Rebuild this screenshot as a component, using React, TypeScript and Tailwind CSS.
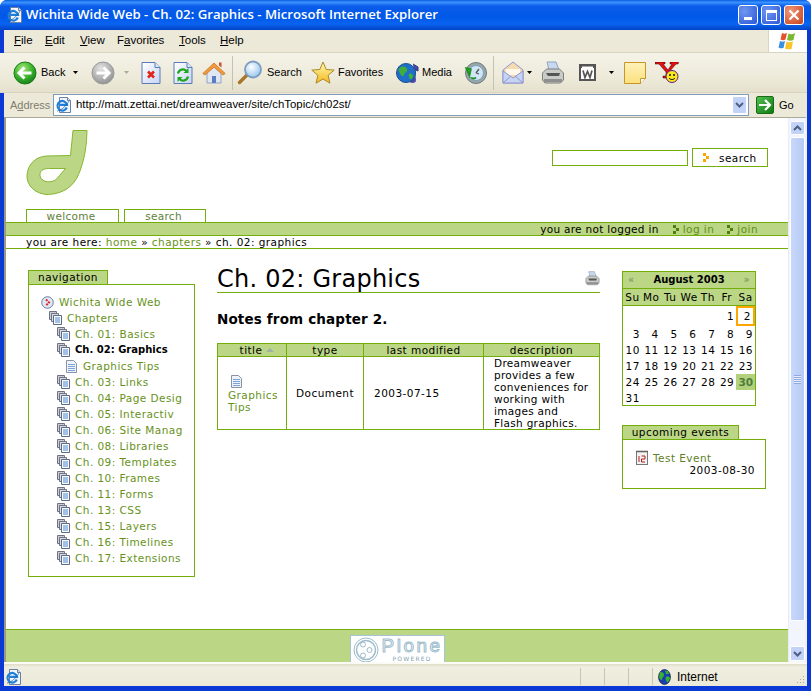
import React from "react";

const sans = "font-['Liberation_Sans',Arial,sans-serif]";

function BackIcon({ gray }: { gray?: boolean }) {
  const id = gray ? "gb" : "gg";
  return (
    <svg width="24" height="24" viewBox="0 0 24 24">
      <defs>
        <radialGradient id={id} cx="40%" cy="30%" r="75%">
          <stop offset="0" stopColor={gray ? "#e4e4e4" : "#a6e87a"} />
          <stop offset="0.55" stopColor={gray ? "#b5b5b5" : "#3fb52f"} />
          <stop offset="1" stopColor={gray ? "#8f8f8f" : "#0f7a15"} />
        </radialGradient>
      </defs>
      <circle cx="12" cy="12" r="11" fill={`url(#${id})`} stroke={gray ? "#999" : "#1b7d1b"} />
      {gray ? (
        <path d="M5.500 12H17M12.500 6.500L18 12l-5.500 5.500" fill="none" stroke="#fff" strokeWidth="3" />
      ) : (
        <path d="M18.500 12H7M11.500 6.500L6 12l5.500 5.500" fill="none" stroke="#fff" strokeWidth="3" />
      )}
    </svg>
  );
}
const Caret = ({ c = "#000" }: { c?: string }) => (
  <svg width="5" height="3" viewBox="0 0 5 3"><path d="M0 0h5L2.500 3z" fill={c} /></svg>
);
const DocFrame = ({ children }: { children: React.ReactNode }) => (
  <svg width="20" height="24" viewBox="0 0 20 24">
    <defs>
      <linearGradient id="dfg" x1="0" y1="0" x2="1" y2="1"><stop offset="0" stopColor="#ffffff" /><stop offset="1" stopColor="#c5d5f5" /></linearGradient>
    </defs>
    <path d="M1 1.500h13l5 5v16H1z" fill="url(#dfg)" stroke="#5a7ab8" />
    <path d="M14 1.500v5h5" fill="#dde7fb" stroke="#5a7ab8" />
    {children}
  </svg>
);
const Stop = () => (
  <DocFrame><path d="M7 10.500l6 6M13 10.500l-6 6" stroke="#e0261a" strokeWidth="2.600" /></DocFrame>
);
const Refresh = () => (
  <DocFrame>
    <path d="M5 12.500a5 5 0 0 1 8.500-2.500" fill="none" stroke="#1fa51f" strokeWidth="2.200" />
    <path d="M15.500 7v5h-5z" fill="#1fa51f" />
    <path d="M15 15.500a5 5 0 0 1-8.500 2.500" fill="none" stroke="#1fa51f" strokeWidth="2.200" />
    <path d="M4.500 21v-5h5z" fill="#1fa51f" />
  </DocFrame>
);
const Home = () => (
  <svg width="24" height="24" viewBox="0 0 24 24">
    <path d="M5 11v11h14V11L12 5z" fill="#dfe7f5" stroke="#8fa3c4" />
    <path d="M10 15h4v7h-4z" fill="#5a7fc0" />
    <path d="M.8 12.500L12 2l11.200 10.500L21 14 12 6.200 3 14z" fill="#f09a3a" stroke="#c8691a" strokeWidth="0.700" />
    <path d="M17 1.500h2.500v5L17 4.500z" fill="#c8502a" />
  </svg>
);
const SearchIco = () => (
  <svg width="27" height="25" viewBox="0 0 27 25">
    <defs>
      <radialGradient id="sg" cx="40%" cy="35%" r="70%"><stop offset="0" stopColor="#ffffff" /><stop offset="1" stopColor="#8fc3ee" /></radialGradient>
    </defs>
    <path d="M10 15L2.500 22.500" stroke="#a9752b" strokeWidth="3.400" strokeLinecap="round" />
    <circle cx="16" cy="9.500" r="8" fill="url(#sg)" stroke="#7d9cc0" strokeWidth="1.800" />
  </svg>
);
const Star = () => (
  <svg width="24" height="24" viewBox="0 0 24 24">
    <defs>
      <linearGradient id="stg" x1="0" y1="0" x2="0" y2="1"><stop offset="0" stopColor="#fffbb5" /><stop offset="1" stopColor="#f7b81a" /></linearGradient>
    </defs>
    <path d="M12 1l3.200 7.500 8 .6-6.100 5.200 1.900 7.900L12 18l-7 4.200 1.900-7.900L.8 9.100l8-.6z" fill="url(#stg)" stroke="#a9892a" />
  </svg>
);
const Media = () => (
  <svg width="24" height="24" viewBox="0 0 24 24">
    <path d="M17 3l5 3v4l-3-1.500V18" fill="#4a4aa8" stroke="#33337f" />
    <ellipse cx="16.500" cy="19" rx="3.500" ry="3" fill="#4a4aa8" />
    <circle cx="10" cy="12" r="9.500" fill="#1f6fc8" stroke="#1a4f8f" />
    <path d="M5 6c3-1 5 0 6 2s-1 3-2 4-1 4-3 3-2-4-3-5 0-3 2-4zM13 13c2-1 4 0 4 2s-2 4-3 3-2-4-1-5z" fill="#3fae3a" />
  </svg>
);
const History = () => (
  <svg width="24" height="24" viewBox="0 0 24 24">
    <circle cx="13" cy="12" r="10.500" fill="#9aa7a8" stroke="#6d7a7d" />
    <circle cx="13" cy="12" r="7.500" fill="#cfe6f7" stroke="#7da0b8" />
    <path d="M13 12l3-4M13 12l3 1" stroke="#555" strokeWidth="1.300" />
    <path d="M8 16.500c2 1.500 4 1.500 5 0M3 7l5 1-1.500 7z" fill="#2da52d" stroke="#1f8f1f" strokeWidth="1.500" />
  </svg>
);
const Mail = () => (
  <svg width="22" height="24" viewBox="0 0 22 24">
    <path d="M1 9L11 1l10 8v13H1z" fill="#f4dcb0" stroke="#8f96d0" />
    <path d="M4 8h14v6H4z" fill="#fff7e8" />
    <path d="M1 10l10 7 10-7v12H1z" fill="#c6d4f4" stroke="#8f96d0" />
    <path d="M1 22l8-7M21 22l-8-7" stroke="#8f96d0" />
  </svg>
);
const Printer = ({ s = 24 }: { s?: number }) => (
  <svg width={s} height={s} viewBox="0 0 24 24">
    <path d="M6 1h9l3 8H8z" fill="#c8d8ee" stroke="#8ea4c0" />
    <path d="M1.500 12l4-4h13l4 4v7l-3 3H4l-2.500-3z" fill="#c9cbc9" stroke="#7d7f7d" />
    <path d="M5 12h14l-1 3H7z" fill="#555" />
    <path d="M3 18h18v3H3z" fill="#8e908e" />
  </svg>
);
const WBox = () => (
  <svg width="17" height="17" viewBox="0 0 17 17">
    <rect width="17" height="17" fill="#555" />
    <rect x="2" y="4" width="13" height="11" fill="#fff" />
    <path d="M3 2.500h11v3H3z" fill="#fff" />
    <path d="M4 6.500l2 7 2.500-6 2.500 6 2-7" fill="none" stroke="#555" strokeWidth="1.700" />
  </svg>
);
const Note = () => (
  <svg width="22" height="22" viewBox="0 0 22 22">
    <defs><linearGradient id="ng" x1="0" y1="0" x2="0" y2="1"><stop offset="0" stopColor="#fff2b8" /><stop offset="1" stopColor="#fce07f" /></linearGradient></defs>
    <path d="M.5.500h21v16l-5 5H.500z" fill="url(#ng)" stroke="#c8972a" />
    <path d="M16.500 21.500v-5h5" fill="#fff" stroke="#c8972a" />
  </svg>
);
const Yahoo = () => (
  <svg width="25" height="22" viewBox="0 0 25 22">
    <path d="M0 0h10v2H8l5 6 4-6h-2V0h6l3-1-1 3h-2l-7 8v4h3v2H8v-2h3v-4L4 2H0z" fill="#e81010" stroke="#200" strokeWidth="0.500" />
    <circle cx="17" cy="14.500" r="6" fill="#f8e81c" stroke="#5a1a8a" />
    <circle cx="15" cy="13" r="0.900" fill="#000" /><circle cx="19" cy="13" r="0.900" fill="#000" />
    <path d="M14 16c1.500 2 4.500 2 6 0" fill="none" stroke="#000" />
  </svg>
);
const IEPage = () => (
  <svg width="16" height="16" viewBox="0 0 16 16">
    <path d="M3.500.500h8l3 3v12h-11z" fill="#f4f7ff" stroke="#6b7f9f" />
    <path d="M11.500.500v3h3" fill="#dbe5f7" stroke="#6b7f9f" />
    <path d="M10.800 10.500A4.800 4.800 0 1 1 11 7.800H3.500" fill="none" stroke="#1f7fd8" strokeWidth="2.200" />
    <path d="M1 14c2 0 8-3 12-10" fill="none" stroke="#155fa8" strokeWidth="0.700" />
  </svg>
);
const Globe = () => (
  <svg width="13" height="16" viewBox="0 0 13 16">
    <ellipse cx="6.500" cy="8" rx="6" ry="7.500" fill="#1a3fb0" stroke="#112" strokeWidth="0.600" />
    <path d="M2 3c3 0 4 1 4 3S4 8 4 10 2 11 1 8zM8 8c2-1 4 0 4 1s-2 5-3 4-2-4-1-5zM7 1.500l3 .5 1 3-3 0z" fill="#35b52f" />
  </svg>
);
const Logo = () => (
  <svg width="62" height="67" viewBox="-0.500 -0.500 62 67">
    <path fillRule="evenodd" d="M46.500 1H60.500L60 11C59 24 56 36 52 45C47 57 37 64 22 65C9 65 0 56 .5 46C1 35 9 27 20 26.500L44 26L45.500 11ZM39 39L22 39C16 39 13 42 13.500 46C14 50 18 52.500 23 52.300C28 52 30 50 33 46Z" fill="#bbd685" stroke="#86b52f" strokeWidth="1" />
  </svg>
);
const Marker = ({ c }: { c: string }) => (
  <svg width="7" height="9" viewBox="0 0 7 9" className="inline-block">
    <path d="M0 0h3v3H0zM3 3h3v3H3zM0 6h3v3H0z" fill={c} />
  </svg>
);
const StackIcon = () => (
  <svg width="13" height="14" viewBox="0 0 13 14" className="shrink-0 mr-[3px]">
    <path d="M.5.500h7v8h-7z" fill="#c9ccd4" stroke="#6d7382" />
    <path d="M2.500 2.500h7v8h-7z" fill="#d9dce4" stroke="#6d7382" />
    <path d="M4.500 4.500h8v9h-8z" fill="#f7f8fc" stroke="#5f6a80" />
    <path d="M6 7h5M6 9h5M6 11h5" stroke="#4f8ad0" />
  </svg>
);
const PageIcon = ({ cls = "" }: { cls?: string }) => (
  <svg width="11" height="13" viewBox="0 0 11 13" className={`shrink-0 ${cls}`}>
    <path d="M.5.500h7l3 3v9H.5z" fill="#eef2fa" stroke="#8a92a5" />
    <path d="M2 4.500h7M2 6.500h7M2 8.500h7M2 10.500h7" stroke="#7ea4d6" />
  </svg>
);
const RootIcon = () => (
  <svg width="13" height="13" viewBox="0 0 13 13" className="shrink-0">
    <circle cx="6.500" cy="6.500" r="5.800" fill="#dfe6f4" stroke="#6f7da0" />
    <path d="M5 3.500l3 3-3 3" fill="none" stroke="#d8262a" strokeWidth="2" strokeDasharray="2 1" />
  </svg>
);
const EventIcon = () => (
  <svg width="12" height="15" viewBox="0 0 12 15" className="shrink-0">
    <rect x=".5" y="1.500" width="11" height="13" fill="#f2f2f2" stroke="#777" />
    <path d="M1 .5v2M3 .5v2M5 .5v2M7 .5v2M9 .5v2M11 .5v2" stroke="#555" />
    <path d="M3 6v6M5.500 6H9v3H5.500v3H9" fill="none" stroke="#b02020" />
  </svg>
);

function Tool({ ml, w, children }: { ml: string; w: string; children: React.ReactNode }) {
  return <div className={`${ml} ${w} shrink-0 flex items-center`}>{children}</div>;
}
const Sep = ({ ml }: { ml: string }) => (
  <div className={`${ml} w-[2px] h-[34px] shrink-0 border-l border-[#c5c2b0] border-r-white`} />
);

const navRest = [
  "Ch. 03: Links", "Ch. 04: Page Desig", "Ch. 05: Interactiv", "Ch. 06: Site Manag", "Ch. 08: Libraries",
  "Ch. 09: Templates", "Ch. 10: Frames", "Ch. 11: Forms", "Ch. 13: CSS", "Ch. 15: Layers", "Ch. 16: Timelines", "Ch. 17: Extensions",
];
const Link = ({ children }: { children: React.ReactNode }) => <span className="text-[#67921a]">{children}</span>;

function NavRow({ icon, pl, children }: { icon: React.ReactNode; pl: string; children: React.ReactNode }) {
  return (
    <div className={`${pl} h-[16px] flex items-center gap-[2px] whitespace-nowrap`}>
      {icon}
      {children}
    </div>
  );
}

const weeks: (string | null)[][] = [
  [null, null, null, null, null, "1", "2"],
  ["3", "4", "5", "6", "7", "8", "9"],
  ["10", "11", "12", "13", "14", "15", "16"],
  ["17", "18", "19", "20", "21", "22", "23"],
  ["24", "25", "26", "27", "28", "29", "30"],
  ["31", null, null, null, null, null, null],
];

export default function App() {
  return (
    <div className={`w-[811px] h-[691px] overflow-hidden bg-[#0a39d6] rounded-t-[7px] flex flex-col ${sans}`}>
      {/* Title bar */}
      <div className="h-[30px] shrink-0 flex items-center bg-[linear-gradient(180deg,#0a5fe0_0%,#3a93ff_8%,#0a5ce8_20%,#0058e8_55%,#0a63f0_80%,#0042c4_100%)]">
        <div className="ml-[7px] w-[16px] h-[16px]"><IEPage /></div>
        <div className="ml-[3px] text-white font-semibold text-[13.200px] font-['Open_Sans',sans-serif] whitespace-nowrap">Wichita Wide Web - Ch. 02: Graphics - Microsoft Internet Explorer</div>
        <div className="ml-auto mr-[7px] flex gap-[3px]">
          <div className="w-[20px] h-[20px] rounded-[3px] border border-white bg-[radial-gradient(circle_at_30%_30%,#6f97f0,#2a56d8)] flex items-end pl-[5px] pb-[4px]"><div className="w-[8px] h-[3px] bg-white" /></div>
          <div className="w-[20px] h-[20px] rounded-[3px] border border-white bg-[radial-gradient(circle_at_30%_30%,#6f97f0,#2a56d8)] flex items-center justify-center"><div className="w-[11px] h-[11px] border border-white border-t-[3px]" /></div>
          <div className="w-[20px] h-[20px] rounded-[3px] border border-white bg-[radial-gradient(circle_at_30%_30%,#f0987a,#c8401a)] flex items-center justify-center">
            <svg width="12" height="12" viewBox="0 0 12 12"><path d="M1.500 1.500l9 9M10.500 1.500l-9 9" stroke="#fff" strokeWidth="2.200" /></svg>
          </div>
        </div>
      </div>

      {/* Chrome + page */}
      <div className="flex-1 min-h-0 mx-[4px] mb-[5px] flex flex-col bg-[#ece9d8]">
        {/* Menu */}
        <div className="h-[23px] shrink-0 flex items-center border-b border-[#d8d4c2] text-[11.500px] text-black">
          <span className="ml-[10px] w-[31px]"><u>F</u>ile</span>
          <span className="w-[35px]"><u>E</u>dit</span>
          <span className="w-[37px]"><u>V</u>iew</span>
          <span className="w-[62px]">F<u>a</u>vorites</span>
          <span className="w-[41px]"><u>T</u>ools</span>
          <span><u>H</u>elp</span>
          <div className="ml-auto mr-0 w-[39px] h-full bg-white border-l border-[#d8d4c2] flex items-center justify-center">
            <svg width="20" height="18" viewBox="0 0 20 18">
              <path d="M4 1c2 1 3 1 5 0L7.500 7.500c-2 1-3 1-5 0z" fill="#e8502a" />
              <path d="M10.500 1.500c2 1 4 1 6.500-.5l-1.500 7c-2 1-4 1-6.500 0z" fill="#7cb82f" />
              <path d="M2 9c2 1 3 1 5 0L5.500 16c-2 .5-3 .5-5-.5z" fill="#3a8fe0" />
              <path d="M8.500 9.500c2 1 4 1 6.500 0L13.500 17c-2 .5-4 .5-6.500-.5z" fill="#f8c52a" />
            </svg>
          </div>
        </div>
        {/* Toolbar */}
        <div className="h-[40px] shrink-0 flex items-center border-b border-[#d8d4c2] bg-[linear-gradient(180deg,#f5f3e8,#ece9d8_70%,#e4e0cc)] text-[11px] text-black -ml-[4px]">
          <Tool ml="ml-[13px]" w="w-[24px]"><BackIcon /></Tool>
          <Tool ml="ml-[4px]" w="w-[32px]"><span>Back</span></Tool>
          <Tool ml="ml-0" w="w-[5px]"><Caret /></Tool>
          <Tool ml="ml-[13px]" w="w-[24px]"><BackIcon gray /></Tool>
          <Tool ml="ml-[9px]" w="w-[5px]"><Caret c="#aca899" /></Tool>
          <Tool ml="ml-[12px]" w="w-[21px]"><Stop /></Tool>
          <Tool ml="ml-[11px]" w="w-[21px]"><Refresh /></Tool>
          <Tool ml="ml-[8px]" w="w-[24px]"><Home /></Tool>
          <Sep ml="ml-[6px]" />
          <Tool ml="ml-[3px]" w="w-[28px]"><SearchIco /></Tool>
          <Tool ml="ml-[2px]" w="w-[44px]"><span>Search</span></Tool>
          <Tool ml="ml-0" w="w-[24px]"><Star /></Tool>
          <Tool ml="ml-[3px]" w="w-[58px]"><span>Favorites</span></Tool>
          <Tool ml="ml-0" w="w-[24px]"><Media /></Tool>
          <Tool ml="ml-[2px]" w="w-[41px]"><span>Media</span></Tool>
          <Tool ml="ml-0" w="w-[24px]"><History /></Tool>
          <Sep ml="ml-[6px]" />
          <Tool ml="ml-[7px]" w="w-[22px]"><Mail /></Tool>
          <Tool ml="ml-[3px]" w="w-[5px]"><Caret /></Tool>
          <Tool ml="ml-[9px]" w="w-[24px]"><Printer /></Tool>
          <Tool ml="ml-[14px]" w="w-[18px]"><WBox /></Tool>
          <Tool ml="ml-[12px]" w="w-[5px]"><Caret /></Tool>
          <Tool ml="ml-[10px]" w="w-[22px]"><Note /></Tool>
          <Tool ml="ml-[9px]" w="w-[25px]"><Yahoo /></Tool>
        </div>
        {/* Address */}
        <div className="h-[24px] shrink-0 flex items-center text-[11px] -ml-[4px]">
          <span className="ml-[10px] w-[43px] text-[#807d6e]">A<u>d</u>dress</span>
          <div className="w-[696px] h-[22px] bg-white border border-[#7f9db9] flex items-center text-black text-[11.400px]">
            <div className="ml-[2px] w-[16px]"><IEPage /></div>
            <span className="ml-[4px]">http://matt.zettai.net/dreamweaver/site/chTopic/ch02st/</span>
            <div className="ml-auto mr-[1px] w-[15px] h-[18px] rounded-[2px] bg-[#c3d3f8] border border-white flex items-center justify-center">
              <svg width="9" height="7" viewBox="0 0 9 7"><path d="M1 1l3.500 3.500L8 1" fill="none" stroke="#4d6185" strokeWidth="2" /></svg>
            </div>
          </div>
          <div className="ml-[7px] w-[18px] h-[18px] rounded-[2px] bg-[linear-gradient(135deg,#4fc04f,#107a10)] border border-[#1a6a1a] flex items-center justify-center">
            <svg width="14" height="12" viewBox="0 0 14 12"><path d="M1 6h10M7 1l5 5-5 5" fill="none" stroke="#fff" strokeWidth="2.200" /></svg>
          </div>
          <span className="ml-[5px]">Go</span>
        </div>

        {/* Viewport */}
        <div className="flex-1 min-h-0 flex border-t border-[#aca899] border-l-2 border-r-2 border-l-[#9a9889] border-r-[#f4f2e8]">
          <div className="flex-1 min-w-0 bg-white flex flex-col font-['DejaVu_Sans',Verdana,sans-serif] text-[10.500px] tracking-[0.45px] text-black leading-[12px]">
            {/* header */}
            <div className="h-[91px] shrink-0 flex justify-between">
              <div className="ml-[20px] mt-[11px]"><Logo /></div>
              <div className="mr-[20px] mt-[30px] h-[19px] flex items-center gap-[4px]">
                <div className="w-[136px] h-[16px] border border-[#74ae0b] bg-white" />
                <div className="w-[76px] h-[19px] border border-[#74ae0b] flex items-center">
                  <span className="ml-[10px] flex"><Marker c="#ffa500" /></span>
                  <span className="ml-[9px]">search</span>
                </div>
              </div>
            </div>
            {/* tabs */}
            <div className="h-[13px] shrink-0 flex items-end pl-[20px] gap-[5px] text-[#5f7f3a] tracking-[0.3px]">
              <div className="w-[93px] h-[13px] border border-b-0 border-[#74ae0b] text-center pr-[3px]">welcome</div>
              <div className="w-[82px] h-[13px] border border-b-0 border-[#74ae0b] text-center pr-[3px]">search</div>
            </div>
            {/* personal bar */}
            <div className="h-[14px] shrink-0 border-y border-[#74ae0b] bg-[#bbd685] flex items-center justify-end pr-[30px]">
              <span className="tracking-[0.3px]">you are not logged in</span>
              <span className="ml-[14px] mr-[3px] flex"><Marker c="#4e7e0a" /></span>
              <span className="text-[#5f8f1a]">log in</span>
              <span className="ml-[13px] mr-[3px] flex"><Marker c="#4e7e0a" /></span>
              <span className="text-[#5f8f1a]">join</span>
            </div>
            {/* breadcrumbs */}
            <div className="h-[13px] shrink-0 border-b border-[#74ae0b] pl-[20px] flex items-center whitespace-nowrap">
              you are here:&nbsp;<Link>home</Link>&nbsp;»&nbsp;<Link>chapters</Link>&nbsp;»&nbsp;ch. 02: graphics
            </div>
            {/* columns */}
            <div className="flex-1 min-h-0 flex pl-[22px]">
              {/* nav */}
              <div className="w-[167px] shrink-0 mt-[21px]">
                <div className="w-[80px] h-[14px] border border-b-0 border-[#74ae0b] bg-[#bbd685] text-center">navigation</div>
                <div className="h-[293px] border border-[#74ae0b] pt-[9px] pl-[12px] text-[#67921a]">
                  <NavRow pl="" icon={<RootIcon />}><span className="ml-[3px]">Wichita Wide Web</span></NavRow>
                  <NavRow pl="pl-[8px]" icon={<StackIcon />}><span>Chapters</span></NavRow>
                  <NavRow pl="pl-[16px]" icon={<StackIcon />}><span>Ch. 01: Basics</span></NavRow>
                  <NavRow pl="pl-[16px]" icon={<StackIcon />}><span className="font-bold text-black text-[10px] tracking-normal">Ch. 02: Graphics</span></NavRow>
                  <NavRow pl="pl-[25px]" icon={<PageIcon />}><span className="ml-[4px]">Graphics Tips</span></NavRow>
                  {navRest.map((t) => (
                    <NavRow key={t} pl="pl-[16px]" icon={<StackIcon />}><span>{t}</span></NavRow>
                  ))}
                </div>
              </div>
              {/* content */}
              <div className="w-[383px] shrink-0 ml-[22px] mt-[17px]">
                <div className="h-[27px] border-b border-[#74ae0b] flex items-start justify-between">
                  <h1 className="text-[24px] leading-[26px] tracking-[0.25px] font-normal">Ch. 02: Graphics</h1>
                  <div className="mt-[5px]"><Printer s={15} /></div>
                </div>
                <p className="mt-[18px] font-bold text-[13.500px] leading-[16px] tracking-[0.15px]">Notes from chapter 2.</p>
                <table className="mt-[16px] w-[382px] table-fixed border-collapse border border-[#74ae0b]">
                  <colgroup>
                    <col className="w-[69px]" /><col className="w-[77px]" /><col className="w-[120px]" /><col className="w-[116px]" />
                  </colgroup>
                  <thead>
                    <tr className="bg-[#bbd685] h-[13px]">
                      <th className="border border-[#74ae0b] font-normal p-0 pl-[10px]">
                        title<svg width="8" height="4" viewBox="0 0 8 4" className="inline-block align-[2px] ml-[4px]"><path d="M0 4h8L4 0z" fill="#9fb3a0" /></svg>
                      </th>
                      <th className="border border-[#74ae0b] font-normal p-0">type</th>
                      <th className="border border-[#74ae0b] font-normal p-0">last modified</th>
                      <th className="border border-[#74ae0b] font-normal p-0">description</th>
                    </tr>
                  </thead>
                  <tbody>
                    <tr className="h-[73px]">
                      <td className="border border-[#74ae0b] pl-[10px] pr-0 py-0">
                        <PageIcon cls="mb-[1px] mt-[1px] ml-[3px]" />
                        <span className="text-[#67921a]">Graphics Tips</span>
                      </td>
                      <td className="border border-[#74ae0b] text-center p-0">Document</td>
                      <td className="border border-[#74ae0b] pl-[10px] p-0">2003-07-15</td>
                      <td className="border border-[#74ae0b] pl-[10px] pr-[10px] py-0 tracking-[0.3px]">Dreamweaver provides a few conveniences for working with images and Flash graphics.</td>
                    </tr>
                  </tbody>
                </table>
              </div>
              {/* right */}
              <div className="w-[144px] shrink-0 ml-[22px] mt-[22px]">
                <div className="w-[134px] border border-[#74ae0b]">
                  <div className="h-[17px] bg-[#bbd685] border-b border-[#74ae0b] flex items-center justify-between px-[5px]">
                    <span className="text-[#6f8f5a] text-[10px]">«</span>
                    <span className="font-bold text-[10px] tracking-normal">August 2003</span>
                    <span className="text-[#6f8f5a] text-[10px]">»</span>
                  </div>
                  <div className="h-[17px] bg-[#bbd685] border-b border-[#74ae0b] grid grid-cols-7 items-center text-center">
                    {["Su", "Mo", "Tu", "We", "Th", "Fr", "Sa"].map((d) => <span key={d}>{d}</span>)}
                  </div>
                  {weeks.map((w, i) => (
                    <div key={i} className={`grid grid-cols-7 items-center ${i === 0 ? "h-[20px]" : i === 5 ? "h-[15px]" : "h-[16px]"}`}>
                      {w.map((d, j) => (
                        <div
                          key={j}
                          className={`h-full flex items-center justify-end pr-[2px] ${
                            d === "2" ? "border-[2px] border-[#ffa500]" : d === "30" ? "bg-[#b3d07d] font-bold text-[#4e7e3a] tracking-normal" : ""
                          }`}
                        >
                          {d}
                        </div>
                      ))}
                    </div>
                  ))}
                </div>
                <div className="mt-[19px] w-[117px] h-[14px] border border-b-0 border-[#74ae0b] bg-[#bbd685] text-center">upcoming events</div>
                <div className="h-[50px] border border-[#74ae0b] pt-[11px] pl-[13px] pr-[10px]">
                  <div className="h-[13px] flex items-center gap-[5px] text-[#5f8028]"><EventIcon /><span>Test Event</span></div>
                  <div className="text-right">2003-08-30</div>
                </div>
              </div>
            </div>
            {/* footer */}
            <div className="h-[33px] shrink-0 border-t border-[#74ae0b] bg-[#bbd685] flex justify-center pt-[5px] overflow-hidden">
              <div className="w-[95px] h-[40px] bg-white border border-[#a8c4d4] flex pl-[2px] pt-[1px]">
                <svg width="26" height="26" viewBox="0 0 26 26" className="shrink-0">
                  <circle cx="13" cy="13" r="12" fill="none" stroke="#9dbccc" strokeWidth="1" />
                  <circle cx="13" cy="13" r="9.500" fill="none" stroke="#9dbccc" strokeWidth="1.500" />
                  <circle cx="10" cy="7.500" r="2.500" fill="none" stroke="#9dbccc" />
                  <circle cx="16.500" cy="13" r="2.500" fill="none" stroke="#9dbccc" />
                  <circle cx="10" cy="18.500" r="2.500" fill="none" stroke="#9dbccc" />
                </svg>
                <div className="ml-[3px] flex flex-col items-center">
                  <span className="text-[19px] leading-[17px] tracking-[2.500px] text-transparent [-webkit-text-stroke:1px_#9dbccc] font-['Liberation_Sans',sans-serif]">Plone</span>
                  <span className="mt-[1px] text-[6px] leading-[7px] tracking-[1.200px] text-[#7f9fb0]">POWERED</span>
                </div>
              </div>
            </div>
          </div>
          {/* scrollbar */}
          <div className="w-[17px] shrink-0 bg-[#f2f5fd] flex flex-col items-center pt-[3px] pb-[1px] border-l border-[#e8ecf8]">
            <div className="w-[15px] h-[14px] shrink-0 rounded-[2px] bg-[#c3d3f8] border border-white flex items-center justify-center">
              <svg width="9" height="6" viewBox="0 0 9 6"><path d="M1 5l3.500-3.500L8 5" fill="none" stroke="#4d6185" strokeWidth="2" /></svg>
            </div>
            <div className="w-[15px] h-[484px] shrink-0 mt-[2px] rounded-[2px] bg-[linear-gradient(90deg,#c8d8fb,#b7caf5)] border border-white flex items-center justify-center">
              <div className="w-[7px] h-[9px] bg-[repeating-linear-gradient(180deg,#8ea8e0_0_1px,#e8eefc_1px_2px)]" />
            </div>
            <div className="flex-1" />
            <div className="w-[15px] h-[15px] shrink-0 rounded-[2px] bg-[#c3d3f8] border border-white flex items-center justify-center">
              <svg width="9" height="6" viewBox="0 0 9 6"><path d="M1 1l3.500 3.500L8 1" fill="none" stroke="#4d6185" strokeWidth="2" /></svg>
            </div>
          </div>
        </div>

        {/* Status */}
        <div className="h-[24px] shrink-0 pt-[5px] flex items-center bg-[linear-gradient(180deg,#fbfaf5_0,#fbfaf5_2px,#dedbc8_2px,#f0eee0_5px,#ece9d8)] text-[12px] text-black">
          <div className="ml-[2px] w-[16px]"><IEPage /></div>
          <div className="ml-[558px] w-[24px] h-[17px] border-l border-[#c8c5b4]" />
          <div className="w-[24px] h-[17px] border-l border-[#c8c5b4]" />
          <div className="w-[24px] h-[17px] border-l border-[#c8c5b4]" />
          <div className="h-[17px] border-l border-[#c8c5b4] pl-[5px] flex items-center gap-[6px]"><Globe /><span>Internet</span></div>
          <svg width="11" height="11" viewBox="0 0 11 11" className="ml-auto mr-[2px] self-end">
            <path d="M9 1h1v1H9zM6 4h1v1H6zM9 4h1v1H9zM3 7h1v1H3zM6 7h1v1H6zM9 7h1v1H9z" fill="#aca899" />
          </svg>
        </div>
      </div>
    </div>
  );
}
